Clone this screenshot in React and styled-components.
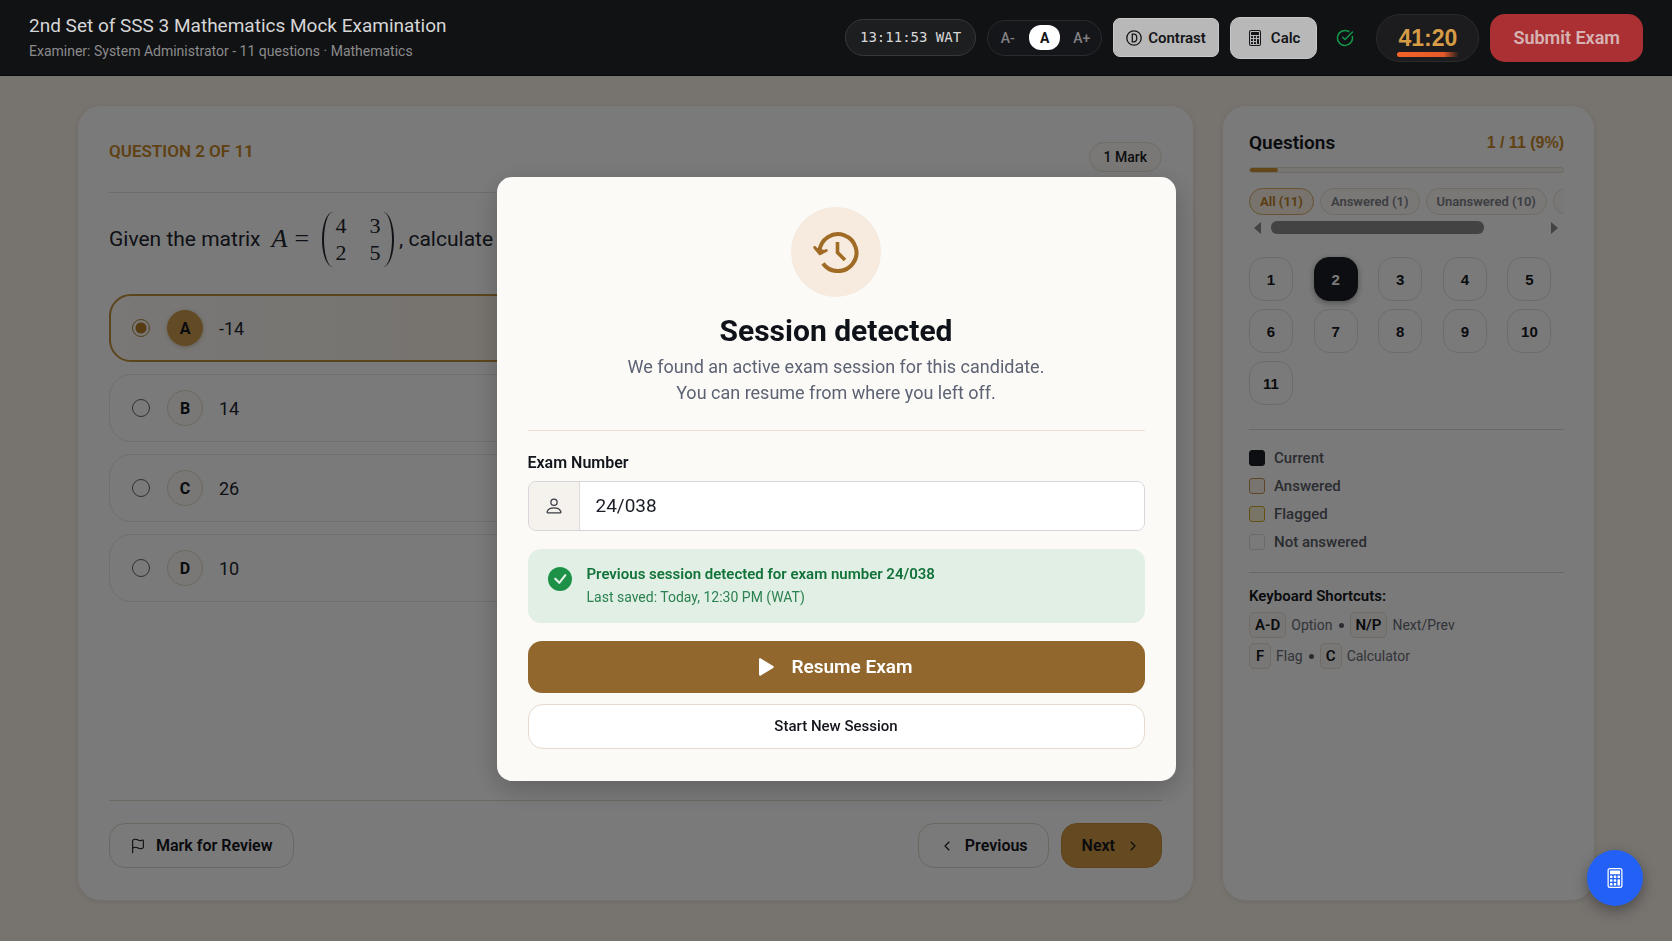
import React, { useState } from "react";
import styled, { createGlobalStyle, css } from "styled-components";
import { ChevronLeft, ChevronRight, CircleCheckBig, Flag } from "lucide-react";
import { BsCalculator, BsCheckCircleFill, BsPerson } from "react-icons/bs";

const GlobalStyle = createGlobalStyle`
  *, *::before, *::after {
    box-sizing: border-box;
  }

  body {
    margin: 0;
    background: #f8f2ea;
    color: #14161c;
    font-family: Roboto, "Liberation Sans", sans-serif;
    font-size: 16px;
  }

  button, input {
    font-family: inherit;
  }

  h1, h2, h3, p, ul {
    margin: 0;
    padding: 0;
  }
`;

const numberFont = `"Liberation Sans", Arial, sans-serif`;

const Page = styled.div`
  min-height: 100vh;
  display: flex;
  flex-direction: column;
`;

/* ---------- header ---------- */

const Header = styled.header`
  position: relative;
  z-index: 20;
  display: flex;
  align-items: center;
  justify-content: space-between;
  gap: 24px;
  height: 76px;
  padding: 0 29px;
  background: #111214;
  border-bottom: 1px solid #08090a;
`;

const ExamTitle = styled.h1`
  color: #d6d6d6;
  font-size: 19px;
  font-weight: 400;
  line-height: 26px;
`;

const ExamMeta = styled.p`
  color: #8b8b8c;
  font-size: 14px;
  line-height: 24px;
`;

const Tools = styled.div`
  display: flex;
  align-items: center;
  gap: 11px;
`;

const Clock = styled.time`
  padding: 0 14px;
  background: #1d1e20;
  border: 1px solid #37383a;
  border-radius: 20px;
  color: #d8d8d8;
  font-family: "DejaVu Sans Mono", "Liberation Mono", monospace;
  font-size: 14px;
  line-height: 35px;
`;

const FontSizes = styled.div`
  display: flex;
  align-items: center;
  justify-content: space-between;
  width: 115px;
  height: 36px;
  padding: 0 4px;
  background: #15161a;
  border: 1px solid #2a2b2e;
  border-radius: 18px;
`;

const FontButton = styled.button`
  width: 31px;
  height: 25px;
  padding: 0;
  border: 0;
  border-radius: 12px;
  background: ${(props) => (props.$active ? "#fff" : "transparent")};
  color: ${(props) => (props.$active ? "#111214" : "#818183")};
  font-size: 14px;
  font-weight: ${(props) => (props.$active ? 700 : 500)};
  cursor: pointer;
`;

const ToolButton = styled.button`
  display: flex;
  align-items: center;
  gap: ${(props) => (props.$tall ? "8px" : "6px")};
  height: ${(props) => (props.$tall ? "42px" : "39px")};
  padding: 0 ${(props) => (props.$tall ? "16px" : "12px")};
  background: #b9b8b8;
  border: 1px solid #c9c8c8;
  border-radius: ${(props) => (props.$tall ? "10px" : "7px")};
  color: #141519;
  font-size: 15px;
  font-weight: 600;
  cursor: pointer;
`;

const Status = styled.span`
  display: flex;
  margin: 0 11px 0 8px;
  color: #14984a;
`;

const Timer = styled.div`
  display: flex;
  flex-direction: column;
  align-items: center;
  width: 103px;
  height: 48px;
  padding-top: 10px;
  background: #1c1c1e;
  border: 1px solid #2b2b2d;
  border-radius: 24px;
  color: #d69c46;
  font-family: ${numberFont};
  font-size: 23px;
  font-weight: 700;
  line-height: 27px;

  &::after {
    content: "";
    width: 62px;
    height: 5px;
    border-radius: 3px;
    background: linear-gradient(90deg, #f4642a 0%, #e45a28 75%, #1c1c1e 100%);
  }
`;

const SubmitButton = styled.button`
  height: 48px;
  padding: 0 23px;
  background: #ab3033;
  border: 0;
  border-radius: 15px;
  color: #d6b3b3;
  font-size: 18px;
  font-weight: 600;
  cursor: pointer;
`;

/* ---------- layout ---------- */

const Main = styled.main`
  flex: 1;
  display: grid;
  grid-template-columns: minmax(0, 1fr) 373px;
  gap: 28px;
  width: 100%;
  max-width: 1566px;
  margin: 0 auto;
  padding: 29px 24px 40px;
`;

const Card = styled.section`
  display: flex;
  flex-direction: column;
  background: #fff;
  border: 1px solid #f3ece4;
  border-radius: 24px;
  box-shadow: 0 1px 4px rgba(80, 60, 30, 0.1);
`;

const QuestionCard = styled(Card)`
  padding: 0 31px 32px;
`;

const QuestionHead = styled.div`
  display: flex;
  align-items: center;
  justify-content: space-between;
  height: 87px;
  padding-top: 4px;
  border-bottom: 1px solid #e9e0d6;
`;

const QuestionCount = styled.h2`
  color: #c8892b;
  font-size: 17px;
  font-weight: 600;
  line-height: 20px;
`;

const Mark = styled.span`
  align-self: flex-end;
  margin-bottom: 20px;
  padding: 0 14px;
  border: 1px solid #e9e0d6;
  border-radius: 15px;
  background: #fdfaf6;
  color: #1b1d24;
  font-size: 14px;
  font-weight: 500;
  line-height: 28px;
`;

const QuestionText = styled.div`
  display: flex;
  align-items: center;
  height: 92px;
  margin-bottom: 9px;
  color: #22252e;
  font-size: 21px;
  white-space: pre;
`;

const Variable = styled.span`
  margin-left: ${(props) => (props.$upright ? "7px" : "11px")};
  font-family: "Liberation Serif", serif;
  font-size: 26px;
  font-style: ${(props) => (props.$upright ? "normal" : "italic")};
`;

const Matrix = styled.span`
  display: flex;
  align-items: stretch;
  height: 55px;
  margin: 0 5px 0 13px;

  &::before,
  &::after {
    content: "";
    width: 11px;
    border: 0 solid #22252e;
  }

  &::before {
    border-left-width: 2px;
    border-radius: 100% 0 0 100% / 50%;
  }

  &::after {
    border-right-width: 2px;
    border-radius: 0 100% 100% 0 / 50%;
  }
`;

const MatrixCells = styled.span`
  display: grid;
  grid-template-columns: 12px 12px;
  column-gap: 22px;
  margin: 0 2px;
  font-family: "Liberation Serif", serif;
  font-size: 22px;
  line-height: 27px;
  text-align: center;
`;

const Options = styled.div`
  display: flex;
  flex-direction: column;
  gap: 12px;
`;

const Option = styled.label`
  display: flex;
  align-items: center;
  gap: 16px;
  height: 68px;
  padding: 0 22px;
  border: 1px solid #efe7df;
  border-radius: 22px;
  color: #22252e;
  font-size: 18px;
  cursor: pointer;

  ${(props) =>
    props.$checked &&
    css`
      padding: 0 21px;
      border: 2px solid #c08e3c;
      background: linear-gradient(90deg, #fcfaf8, #f5ebdd 60%);
    `}
`;

const Radio = styled.input`
  appearance: none;
  width: 18px;
  height: 18px;
  margin: 0 1px 0 0;
  border: 1px solid #60636c;
  border-radius: 50%;

  &:checked {
    border-color: #a9803c;
    background: radial-gradient(circle, #b17a26 5px, transparent 6px);
  }
`;

const Letter = styled.span`
  display: flex;
  align-items: center;
  justify-content: center;
  width: 36px;
  height: 36px;
  border: 1px solid ${(props) => (props.$checked ? "#cd9b4b" : "#e4d8cb")};
  border-radius: 50%;
  background: ${(props) => (props.$checked ? "#cd9b4b" : "#fcfaf6")};
  box-shadow: ${(props) => (props.$checked ? "0 1px 4px rgba(120, 80, 20, 0.3)" : "none")};
  color: #16181e;
  font-size: 16px;
  font-weight: 700;
`;

const QuestionFoot = styled.div`
  display: flex;
  gap: 12px;
  margin-top: auto;
  padding-top: 22px;
  border-top: 1px solid #e4dace;
`;

const NavButton = styled.button`
  display: flex;
  align-items: center;
  gap: 10px;
  height: 45px;
  padding: 0 20px;
  border: 1px solid ${(props) => (props.$primary ? "#c68f38" : "#e2d6c9")};
  border-radius: 16px;
  background: ${(props) => (props.$primary ? "#d29a45" : "transparent")};
  color: #14161c;
  font-size: 16px;
  font-weight: 600;
  cursor: pointer;

  &:first-child {
    margin-right: auto;
  }
`;

/* ---------- sidebar ---------- */

const Sidebar = styled(Card)`
  padding: 25px 30px 28px 26px;
`;

const SideHead = styled.div`
  display: flex;
  align-items: center;
  justify-content: space-between;
  line-height: 24px;
`;

const SideTitle = styled.h2`
  font-size: 19px;
  font-weight: 600;
`;

const SideCount = styled.span`
  color: #c8892b;
  font-family: ${numberFont};
  font-size: 16px;
  font-weight: 700;
`;

const Progress = styled.div`
  height: 6px;
  margin-top: 12px;
  border: 1px solid #e9dfd2;
  border-radius: 3px;
  background: #faf6f0;
`;

const ProgressFill = styled.div`
  height: 4px;
  border-radius: 2px;
  background: #cf9434;
`;

const Filters = styled.div`
  display: flex;
  gap: 6px;
  margin-top: 15px;
  overflow: hidden;
`;

const Filter = styled.button`
  flex: none;
  min-width: 64px;
  height: 27px;
  padding: 0 10px;
  border: 1px solid ${(props) => (props.$active ? "#d9ab66" : "#e9dfd4")};
  border-radius: 14px;
  background: ${(props) => (props.$active ? "#faf1e4" : "#fdfbf8")};
  color: ${(props) => (props.$active ? "#bd8228" : "#7f818a")};
  font-size: 13px;
  font-weight: ${(props) => (props.$active ? 700 : 600)};
  cursor: pointer;
`;

const ScrollBar = styled.div`
  display: flex;
  align-items: center;
  gap: 10px;
  height: 13px;
  margin-top: 6px;
  padding: 0 6px 0 5px;
`;

const ScrollArrow = styled.span`
  border: 6px solid transparent;
  border-${(props) => props.$side}: 7px solid #8c8c8c;
  border-${(props) => (props.$side === "left" ? "right" : "left")}-width: 0;
`;

const ScrollTrack = styled.div`
  flex: 1;
`;

const ScrollThumb = styled.div`
  width: 79%;
  height: 13px;
  border-radius: 6px;
  background: #8c8c8c;
`;

const NumberGrid = styled.div`
  display: grid;
  grid-template-columns: repeat(5, 1fr);
  gap: 8px;
  margin-top: 23px;
  padding-bottom: 24px;
  border-bottom: 1px solid #e4d8cc;
`;

const NumberButton = styled.button`
  width: 44px;
  height: 44px;
  padding: 0;
  border: 1px solid ${(props) => (props.$current ? "#1c1e24" : "#e9dfd6")};
  border-radius: 15px;
  background: ${(props) => (props.$current ? "#1c1e24" : "transparent")};
  box-shadow: ${(props) => (props.$current ? "0 2px 6px rgba(0, 0, 0, 0.35)" : "none")};
  color: ${(props) => (props.$current ? "#fff" : "#16181e")};
  font-family: ${numberFont};
  font-size: 15px;
  font-weight: 700;
  cursor: pointer;
`;

const Legend = styled.ul`
  display: flex;
  flex-direction: column;
  gap: 4px;
  padding: 16px 0 18px;
  border-bottom: 1px solid #e4d8cc;
  list-style: none;
`;

const LegendItem = styled.li`
  display: flex;
  align-items: center;
  gap: 9px;
  color: #5a5d68;
  font-size: 15px;
  font-weight: 500;
  line-height: 24px;
`;

const Swatch = styled.span`
  width: 16px;
  height: 16px;
  border: 1px solid ${(props) => props.$border};
  border-radius: 3px;
  background: ${(props) => props.$fill};
`;

const ShortcutTitle = styled.h3`
  margin-top: 13px;
  font-size: 15px;
  font-weight: 600;
  line-height: 21px;
`;

const ShortcutRow = styled.p`
  display: flex;
  align-items: center;
  gap: 5px;
  margin-top: 5px;
  color: #6a6d77;
  font-size: 14px;
`;

const Bullet = styled.span`
  width: 5px;
  height: 5px;
  margin: 0 1px;
  border-radius: 50%;
  background: #5a5d68;
`;

const Key = styled.kbd`
  min-width: 22px;
  padding: 0 5px;
  border: 1px solid #e8dfd5;
  border-radius: 5px;
  background: #fbf8f4;
  color: #16181e;
  font-family: inherit;
  font-size: 15px;
  font-weight: 600;
  line-height: 24px;
  text-align: center;
`;

/* ---------- session dialog ---------- */

const Backdrop = styled.div`
  position: fixed;
  inset: 0;
  z-index: 10;
  display: flex;
  align-items: center;
  justify-content: center;
  padding: 16px 16px 0;
  background: rgba(0, 0, 0, 0.52);
`;

const Dialog = styled.div`
  width: 100%;
  max-width: 679px;
  padding: 30px 31px 32px;
  border-radius: 15px;
  background: #fcfaf7;
  box-shadow: 0 8px 28px rgba(0, 0, 0, 0.22);
`;

const DialogHead = styled.div`
  display: flex;
  flex-direction: column;
  align-items: center;
  padding-bottom: 24px;
  border-bottom: 1px solid #ecdfd5;
  text-align: center;
`;

const HistoryBadge = styled.span`
  display: flex;
  align-items: center;
  justify-content: center;
  width: 90px;
  height: 90px;
  border-radius: 50%;
  background: #f7ebdf;
`;

const DialogTitle = styled.h2`
  margin-top: 14px;
  color: #0f1218;
  font-size: 30px;
  font-weight: 700;
  line-height: 40px;
`;

const DialogText = styled.p`
  margin-top: 3px;
  color: #5d6374;
  font-size: 18px;
  line-height: 26px;
`;

const FieldLabel = styled.label`
  display: block;
  margin: 22px 0 8px;
  color: #12151b;
  font-size: 16px;
  font-weight: 600;
  line-height: 20px;
`;

const Field = styled.div`
  display: flex;
  height: 50px;
  border: 1px solid #d5d5da;
  border-radius: 8px;
  overflow: hidden;
`;

const FieldIcon = styled.span`
  display: flex;
  align-items: center;
  justify-content: center;
  width: 51px;
  border-right: 1px solid #dcd9d7;
  background: #f5f1ec;
  color: #3a3d46;
`;

const FieldInput = styled.input`
  flex: 1;
  min-width: 0;
  padding: 0 16px;
  border: 0;
  outline: 0;
  background: #fff;
  color: #1b1e27;
  font-size: 19px;
`;

const Notice = styled.div`
  display: flex;
  align-items: center;
  gap: 15px;
  height: 74px;
  margin: 18px 0;
  padding: 0 20px;
  border-radius: 13px;
  background: #e2efe5;
  color: #1d9147;
`;

const NoticeIcon = styled(BsCheckCircleFill)`
  margin-bottom: 14px;
`;

const NoticeTitle = styled.p`
  color: #12733a;
  font-size: 15px;
  font-weight: 600;
  line-height: 24px;
`;

const NoticeText = styled.p`
  color: #2b8250;
  font-size: 14px;
  line-height: 23px;
`;

const ResumeButton = styled.button`
  display: flex;
  align-items: center;
  justify-content: center;
  gap: 17px;
  width: 100%;
  height: 52px;
  border: 0;
  border-radius: 14px;
  background: #91672e;
  color: #fff;
  font-size: 19px;
  font-weight: 600;
  cursor: pointer;
`;

const StartButton = styled.button`
  width: 100%;
  height: 45px;
  margin-top: 11px;
  border: 1px solid #e6d9cf;
  border-radius: 15px;
  background: #fff;
  color: #14161c;
  font-size: 15px;
  font-weight: 500;
  cursor: pointer;
`;

const CalcFab = styled.button`
  position: fixed;
  right: 29px;
  bottom: 35px;
  z-index: 30;
  display: flex;
  align-items: center;
  justify-content: center;
  width: 56px;
  height: 56px;
  padding: 0;
  border: 0;
  border-radius: 50%;
  background: #2360f5;
  box-shadow: 0 5px 14px rgba(0, 0, 0, 0.35);
  color: #fff;
  cursor: pointer;
`;

function ContrastIcon() {
  return (
    <svg width="16" height="16" viewBox="0 0 16 16" fill="none" stroke="currentColor" strokeWidth="1.3">
      <circle cx="8" cy="8" r="7.2" />
      <path d="M6.3 4.2h1.5c2 0 3 1.5 3 3.8s-1 3.8-3 3.8H6.3z" />
    </svg>
  );
}

function HistoryIcon() {
  return (
    <svg width="46" height="42" viewBox="0 0 46 42" fill="none" stroke="#a06b25" strokeWidth="4">
      <path d="M6.5 20.5A18.5 18.5 0 1 1 10 32.5" />
      <path d="M24.5 11v10.500l7.500 7.500" strokeWidth="3.600" />
      <path d="M1.800 16.500l5.200 6.200 6.200-3.200" fill="#a06b25" strokeWidth="3" strokeLinejoin="round" strokeLinecap="round" />
    </svg>
  );
}

function PlayIcon() {
  return (
    <svg width="15" height="18" viewBox="0 0 15 18" fill="currentColor">
      <path d="M0 1.500C0 .4 1 0 1.900.6l12.300 7.500c.8.500.8 1.300 0 1.800L1.900 17.400C1 18 0 17.600 0 16.500z" />
    </svg>
  );
}

const answers = [
  { letter: "A", text: "-14" },
  { letter: "B", text: "14" },
  { letter: "C", text: "26" },
  { letter: "D", text: "10" },
];

const filters = ["All (11)", "Answered (1)", "Unanswered (10)", ""];

const legend = [
  { label: "Current", border: "#1c1e24", fill: "#1c1e24" },
  { label: "Answered", border: "#c4924a", fill: "#faf5ed" },
  { label: "Flagged", border: "#d2a52c", fill: "#fbf4d8" },
  { label: "Not answered", border: "#e6dcd3", fill: "transparent" },
];

function App() {
  const [fontSize, setFontSize] = useState("A");
  const [answer, setAnswer] = useState("A");
  const [filter, setFilter] = useState("All (11)");
  const [examNumber, setExamNumber] = useState("24/038");
  const answered = 1;
  const total = 11;

  return (
    <Page>
      <GlobalStyle />
      <Header>
        <div>
          <ExamTitle>2nd Set of SSS 3 Mathematics Mock Examination</ExamTitle>
          <ExamMeta>Examiner: System Administrator - 11 questions · Mathematics</ExamMeta>
        </div>
        <Tools>
          <Clock>13:11:53 WAT</Clock>
          <FontSizes>
            {["A-", "A", "A+"].map((size) => (
              <FontButton key={size} $active={size === fontSize} onClick={() => setFontSize(size)}>
                {size}
              </FontButton>
            ))}
          </FontSizes>
          <ToolButton>
            <ContrastIcon />
            Contrast
          </ToolButton>
          <ToolButton $tall>
            <BsCalculator size={16} />
            Calc
          </ToolButton>
          <Status>
            <CircleCheckBig size={18} />
          </Status>
          <Timer>41:20</Timer>
          <SubmitButton>Submit Exam</SubmitButton>
        </Tools>
      </Header>

      <Main>
        <QuestionCard>
          <QuestionHead>
            <QuestionCount>QUESTION 2 OF 11</QuestionCount>
            <Mark>1 Mark</Mark>
          </QuestionHead>
          <QuestionText>
            Given the matrix
            <Variable>A</Variable>
            <Variable $upright>=</Variable>
            <Matrix>
              <MatrixCells>
                <span>4</span>
                <span>3</span>
                <span>2</span>
                <span>5</span>
              </MatrixCells>
            </Matrix>
            {", calculate"}
          </QuestionText>
          <Options>
            {answers.map(({ letter, text }) => (
              <Option key={letter} $checked={letter === answer}>
                <Radio
                  type="radio"
                  name="answer"
                  checked={letter === answer}
                  onChange={() => setAnswer(letter)}
                />
                <Letter $checked={letter === answer}>{letter}</Letter>
                {text}
              </Option>
            ))}
          </Options>
          <QuestionFoot>
            <NavButton>
              <Flag size={16} strokeWidth={1.6} />
              Mark for Review
            </NavButton>
            <NavButton>
              <ChevronLeft size={16} strokeWidth={1.6} />
              Previous
            </NavButton>
            <NavButton $primary>
              Next
              <ChevronRight size={16} strokeWidth={1.6} />
            </NavButton>
          </QuestionFoot>
        </QuestionCard>

        <Sidebar as="aside">
          <SideHead>
            <SideTitle>Questions</SideTitle>
            <SideCount>1 / 11 (9%)</SideCount>
          </SideHead>
          <Progress>
            <ProgressFill style={{ width: `${(answered / total) * 100}%` }} />
          </Progress>
          <Filters>
            {filters.map((label) => (
              <Filter
                key={label}
                $active={label === filter}
                aria-label={label || "Flagged"}
                onClick={() => setFilter(label)}
              >
                {label}
              </Filter>
            ))}
          </Filters>
          <ScrollBar>
            <ScrollArrow $side="right" />
            <ScrollTrack>
              <ScrollThumb />
            </ScrollTrack>
            <ScrollArrow $side="left" />
          </ScrollBar>
          <NumberGrid>
            {Array.from({ length: total }, (_, i) => (
              <NumberButton key={i} $current={i === 1}>
                {i + 1}
              </NumberButton>
            ))}
          </NumberGrid>
          <Legend>
            {legend.map((item) => (
              <LegendItem key={item.label}>
                <Swatch $border={item.border} $fill={item.fill} />
                {item.label}
              </LegendItem>
            ))}
          </Legend>
          <ShortcutTitle>Keyboard Shortcuts:</ShortcutTitle>
          <ShortcutRow>
            <Key>A-D</Key>
            <span>Option</span>
            <Bullet />
            <Key>N/P</Key>
            <span>Next/Prev</span>
          </ShortcutRow>
          <ShortcutRow>
            <Key>F</Key>
            <span>Flag</span>
            <Bullet />
            <Key>C</Key>
            <span>Calculator</span>
          </ShortcutRow>
        </Sidebar>
      </Main>

      <Backdrop>
        <Dialog role="dialog" aria-modal="true" aria-labelledby="session-title">
          <DialogHead>
            <HistoryBadge>
              <HistoryIcon />
            </HistoryBadge>
            <DialogTitle id="session-title">Session detected</DialogTitle>
            <DialogText>
              We found an active exam session for this candidate.
              <br />
              You can resume from where you left off.
            </DialogText>
          </DialogHead>
          <FieldLabel htmlFor="exam-number">Exam Number</FieldLabel>
          <Field>
            <FieldIcon>
              <BsPerson size={20} />
            </FieldIcon>
            <FieldInput
              id="exam-number"
              type="text"
              value={examNumber}
              onChange={(e) => setExamNumber(e.target.value)}
            />
          </Field>
          <Notice>
            <NoticeIcon size={24} />
            <div>
              <NoticeTitle>Previous session detected for exam number 24/038</NoticeTitle>
              <NoticeText>Last saved: Today, 12:30 PM (WAT)</NoticeText>
            </div>
          </Notice>
          <ResumeButton>
            <PlayIcon />
            Resume Exam
          </ResumeButton>
          <StartButton>Start New Session</StartButton>
        </Dialog>
      </Backdrop>

      <CalcFab aria-label="Calculator">
        <BsCalculator size={20} />
      </CalcFab>
    </Page>
  );
}

export default App;
